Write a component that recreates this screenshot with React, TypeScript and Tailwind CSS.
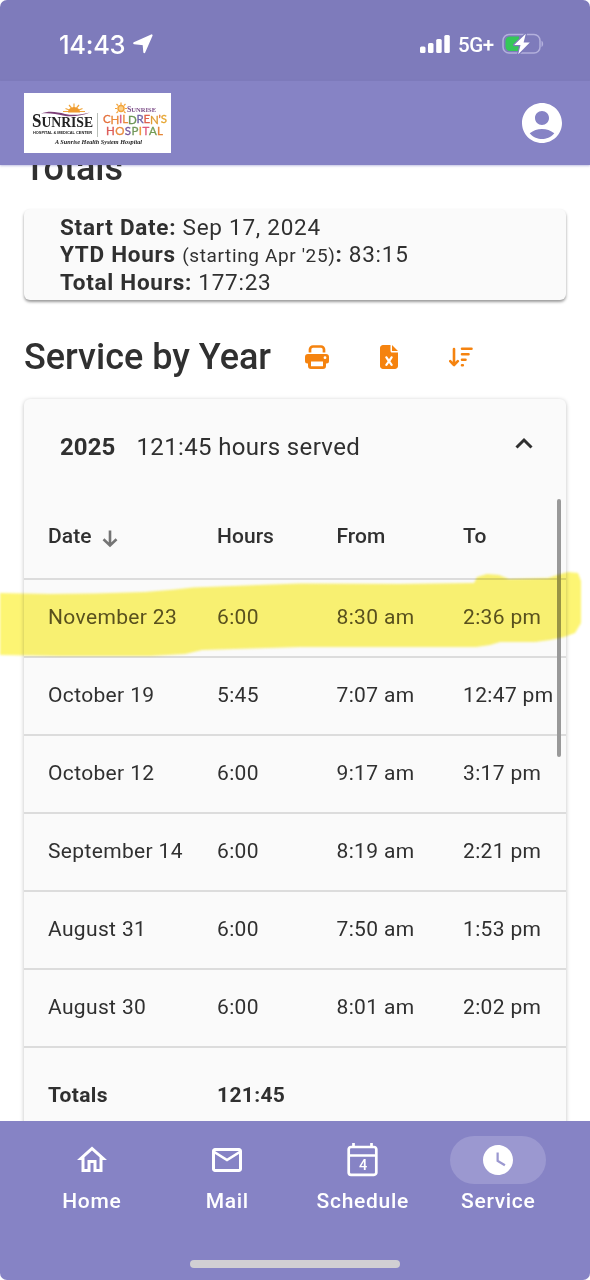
import { clsx } from 'clsx'
import type { ReactNode } from 'react'
import { FaFileExcel } from 'react-icons/fa6'
import {
  MdAccountCircle,
  MdMailOutline,
  MdOutlineHome,
  MdWatchLater,
} from 'react-icons/md'

const shifts = [
  {
    date: 'November 23',
    hours: '6:00',
    from: '8:30 am',
    to: '2:36 pm',
    marked: true,
  },
  { date: 'October 19', hours: '5:45', from: '7:07 am', to: '12:47 pm' },
  { date: 'October 12', hours: '6:00', from: '9:17 am', to: '3:17 pm' },
  { date: 'September 14', hours: '6:00', from: '8:19 am', to: '2:21 pm' },
  { date: 'August 31', hours: '6:00', from: '7:50 am', to: '1:53 pm' },
  { date: 'August 30', hours: '6:00', from: '8:01 am', to: '2:02 pm' },
]

const columns = 'grid grid-cols-[169px_119.5px_126.5px_1fr] items-center pl-6'

function StatusBar() {
  return (
    <div className="flex h-[81px] shrink-0 items-center bg-[#7e7bbb] pt-[7px] pl-[59px] text-white">
      <span className="w-[74px] pt-px font-['Inter'] text-[25.5px] leading-none font-medium tracking-[-0.3px]">
        14:43
      </span>
      <svg
        className="h-5 w-5"
        viewBox="0 0 20 20"
        fill="currentColor"
        stroke="currentColor"
        strokeWidth="2"
        strokeLinejoin="round"
      >
        <path d="M18.600 1.300 11.300 18.200 10.600 10.200 1.200 9.200z" />
      </svg>
      <svg
        className="ml-[267px] h-5 w-[30px]"
        viewBox="0 0 30 20"
        fill="currentColor"
      >
        <rect x="0" y="12.500" width="5.500" height="6.500" rx="1.500" />
        <rect x="8" y="9" width="5.500" height="10" rx="1.500" />
        <rect x="16.200" y="5" width="5.500" height="14" rx="1.500" />
        <rect x="24.300" y="1" width="5.500" height="18" rx="1.500" />
      </svg>
      <span className="ml-2 w-11 pt-0.5 font-['Roboto'] text-[20.5px] leading-none font-medium tracking-[-0.4px]">
        5G+
      </span>
      <svg className="h-6 w-[42px]" viewBox="0 0 42 24">
        <rect
          x="1"
          y="2.500"
          width="37"
          height="18.500"
          rx="6"
          fill="none"
          stroke="#b3b0dc"
          strokeWidth="1.500"
        />
        <path
          d="M8 4.500h9v14.500H8a4.500 4.500 0 0 1-4.500-4.500V9A4.500 4.500 0 0 1 8 4.500z"
          fill="#34c759"
        />
        <path d="M39.500 8.800c2.200 1 2.200 5.200 0 6.200z" fill="#b3b0dc" />
        <path
          d="M23.800 1.800 12.200 13h6.300l-2.300 9.200L27.800 10.500h-6.200z"
          fill="#fff"
          stroke="#7e7bbb"
          strokeWidth="2.500"
          paintOrder="stroke"
          strokeLinejoin="round"
        />
      </svg>
    </div>
  )
}

function HospitalLogo() {
  return (
    <svg className="h-[60px] w-[147px] bg-white" viewBox="0 0 147 60">
      <path
        d="M50 10.500v5M45 12l2.500 3M55 12l-2.500 3M41.500 15.500l5 2M58.500 15.500l-5 2M39 18.500h22"
        stroke="#f0a63c"
        strokeWidth="1.200"
      />
      <path d="M44 19.500a6 5.500 0 0 1 12 0z" fill="#ef9a2e" />
      <path
        d="M17 20.500c8-3 16-1.500 24 .5 8 1.500 15 1 25-1.500-9 3.500-18 4.500-26 3.200-8-1.700-15-3.200-23-2.200z"
        fill="#7d3f78"
      />
      <g fontFamily="Liberation Serif, serif" fontWeight="700" fill="#222">
        <text x="8" y="34" fontSize="18" textLength="61" lengthAdjust="spacingAndGlyphs">
          S<tspan fontSize="14.500">UNRISE</tspan>
        </text>
        <text
          x="31"
          y="51"
          fontSize="6.500"
          fontStyle="italic"
          textLength="87"
          lengthAdjust="spacingAndGlyphs"
        >
          A Sunrise Health System Hospital
        </text>
      </g>
      <text
        x="9"
        y="40.500"
        fontSize="3.900"
        fontFamily="Liberation Sans, sans-serif"
        fontWeight="700"
        fill="#222"
        textLength="59"
        lengthAdjust="spacingAndGlyphs"
      >
        HOSPITAL &amp; MEDICAL CENTER
      </text>
      <path d="M73.500 20v24" stroke="#9ba39b" strokeWidth=".7" />
      <circle cx="97" cy="15.500" r="3" fill="#fbd08a" stroke="#f3a43c" strokeWidth="1.500" />
      <path
        d="M97 9.500v2.500M92.500 11l1.500 1.500M101.500 11 100 12.500M91 15.500h2M101 15.500h2M92.500 20l1.500-1.500M101.500 20l-1.500-1.500"
        stroke="#f3a43c"
        strokeWidth="1.200"
      />
      <text
        x="103"
        y="19"
        fontSize="7.800"
        fontFamily="Liberation Serif, serif"
        fontWeight="700"
        fill="#7b4b86"
        textLength="29"
        lengthAdjust="spacingAndGlyphs"
      >
        S<tspan fontSize="6.500">UNRISE</tspan>
      </text>
      <g fontFamily="Lato, sans-serif" fontSize="11.500" fontWeight="400" strokeWidth=".3">
        <text x="79" y="30" textLength="64">
          <tspan fill="#e4703c" stroke="#e4703c">C</tspan>
          <tspan fill="#e98a3d" stroke="#e98a3d" dy="1">H</tspan>
          <tspan fill="#d45d91" stroke="#d45d91" dy="-1">I</tspan>
          <tspan fill="#e98a3d" stroke="#e98a3d">L</tspan>
          <tspan fill="#6d9557" stroke="#6d9557" dy=".5">D</tspan>
          <tspan fill="#7164a8" stroke="#7164a8" dy="-.5">R</tspan>
          <tspan fill="#df604c" stroke="#df604c">E</tspan>
          <tspan fill="#df9b32" stroke="#df9b32" dy=".5">N</tspan>
          <tspan fill="#e47536" stroke="#e47536" dy="-.5">'</tspan>
          <tspan fill="#e6a52f" stroke="#e6a52f">S</tspan>
        </text>
        <text x="82" y="41.500" textLength="57">
          <tspan fill="#dc5b58" stroke="#dc5b58">H</tspan>
          <tspan fill="#e98a3d" stroke="#e98a3d">O</tspan>
          <tspan fill="#75569c" stroke="#75569c">S</tspan>
          <tspan fill="#73995c" stroke="#73995c">P</tspan>
          <tspan fill="#ee9638" stroke="#ee9638">I</tspan>
          <tspan fill="#df5c7d" stroke="#df5c7d">T</tspan>
          <tspan fill="#739c55" stroke="#739c55">A</tspan>
          <tspan fill="#e48537" stroke="#e48537">L</tspan>
        </text>
      </g>
    </svg>
  )
}

function Summary() {
  return (
    <section className="h-[91px] rounded-md bg-[#fafafa] px-9 pt-[5px] text-[22.500px] leading-[27px] tracking-[0.73px] shadow-[0_2px_3px_rgba(0,0,0,0.4)]">
      <p>
        <b>Start Date:</b> Sep 17, 2024
      </p>
      <p>
        <b>YTD Hours</b>{' '}
        <span className="text-[19px] tracking-[0.63px]">(starting Apr '25)</span>
        <b>:</b> 83:15
      </p>
      <p>
        <b>Total Hours:</b> 177:23
      </p>
    </section>
  )
}

function PrintIcon() {
  return (
    <svg className="h-6 w-6" viewBox="0 0 24 24" fill="none">
      <path
        d="M5 7.500V4.500A3 3 0 0 1 8 1.500h8a3 3 0 0 1 3 3v3"
        stroke="currentColor"
        strokeWidth="2.700"
      />
      <path
        fill="currentColor"
        fillRule="evenodd"
        d="M3 9h18a3 3 0 0 1 3 3v4a2.500 2.500 0 0 1-2.500 2.500H21v2.500a3 3 0 0 1-3 3H6a3 3 0 0 1-3-3v-2.500h-.5A2.500 2.500 0 0 1 0 16v-4a3 3 0 0 1 3-3zm3 7.500v4.800h12v-4.800zM20 11.300a1.400 1.400 0 1 0 0 2.800 1.400 1.400 0 0 0 0-2.800z"
      />
    </svg>
  )
}

function SortIcon() {
  return (
    <svg
      className="h-6 w-6"
      viewBox="0 0 24 24"
      fill="none"
      stroke="currentColor"
      strokeWidth="2.600"
      strokeLinecap="round"
      strokeLinejoin="round"
    >
      <path d="M5 4v16M1.200 16.200 5 20.200l3.800-4M13 3.800H22.500M13 9.300h6.500M13 14.800h3.500M13 20.300h.8" />
    </svg>
  )
}

function ShiftTable() {
  return (
    <div className="text-[21px] tracking-[0.35px]">
      <div
        className={clsx(
          columns,
          'h-[86px] border-b-2 border-[#dcdcdc] pt-0.5 font-medium tracking-[0.05px]',
        )}
      >
        <span className="flex items-center gap-[11px]">
          Date
          <svg
            className="mt-[3px] h-[18px] w-4"
            viewBox="0 0 16 18"
            fill="none"
            stroke="#747474"
            strokeWidth="2.600"
          >
            <path d="M8 .5v15M1.500 9.200 8 15.500l6.500-6.300" />
          </svg>
        </span>
        <span>Hours</span>
        <span>From</span>
        <span>To</span>
      </div>
      {shifts.map((shift) => (
        <div
          key={shift.date}
          className={clsx(
            columns,
            'h-[78px] border-b-2 border-[#dcdcdc] whitespace-nowrap',
            shift.marked && 'text-[#5a5440]',
          )}
        >
          <span>{shift.date}</span>
          <span>{shift.hours}</span>
          <span>{shift.from}</span>
          <span>{shift.to}</span>
        </div>
      ))}
      <div className={clsx(columns, 'h-24 font-bold')}>
        <span>Totals</span>
        <span>121:45</span>
      </div>
    </div>
  )
}

function Highlight() {
  return (
    <svg
      className="pointer-events-none absolute top-[565px] left-0 h-24 w-[590px] mix-blend-multiply blur-[1px]"
      viewBox="0 0 590 96"
    >
      <path
        fill="#fdf573"
        d="M-4 28 50 29 95 28.500 145 27 175 24.500 193 22.500 300 18.500 400 19 474 18 477 12 487 9 499 10 509 14 548 13 557 10 568 7 578 8 581 16 581 58 575 68 564 72 550 75 535 77 500 77 490 80 476 82 400 82 300 82 202 85 185 89 150 91 60 91 -4 90z"
      />
    </svg>
  )
}

function CalendarIcon() {
  return (
    <svg className="h-[34px] w-[31px]" viewBox="0 0 31 34" fill="none">
      <path
        d="M6.500 0v4M24.500 0v4M2 12.500h27M4 4h23a2.300 2.300 0 0 1 2.300 2.300v23.200a2.300 2.300 0 0 1-2.300 2.300H4a2.300 2.300 0 0 1-2.300-2.300V6.300A2.300 2.300 0 0 1 4 4z"
        stroke="currentColor"
        strokeWidth="2.700"
      />
      <text
        x="16"
        y="27"
        textAnchor="middle"
        fontSize="14.500"
        fontWeight="500"
        fill="currentColor"
        fontFamily="Roboto, sans-serif"
      >
        4
      </text>
    </svg>
  )
}

function NavItem({
  label,
  active = false,
  children,
}: {
  label: string
  active?: boolean
  children: ReactNode
}) {
  return (
    <button className="flex w-[135.500px] flex-col items-center">
      <span
        className={clsx(
          'flex h-12 w-24 items-center justify-center rounded-full',
          active && 'bg-[#9b98d0]',
        )}
      >
        {children}
      </span>
      <span className="mt-[3px] text-[21px] leading-7 font-medium tracking-[0.7px]">
        {label}
      </span>
    </button>
  )
}

export default function App() {
  return (
    <div className="relative flex h-[1280px] w-[590px] flex-col overflow-hidden rounded-[7px] bg-white font-['Roboto',sans-serif] text-[#303030]">
      <StatusBar />
      <header className="flex h-[84px] shrink-0 items-center justify-between bg-[#8683c5] px-6 text-white shadow-[0_1px_2px_rgba(134,131,197,0.5)]">
        <HospitalLogo />
        <MdAccountCircle className="size-[48px]" />
      </header>

      <main className="h-[956px] shrink-0 overflow-hidden px-6">
        <h2 className="-mt-[19px] h-[63px] text-[36px] leading-[44px] font-medium">
          Totals
        </h2>
        <Summary />
        <div className="flex h-[99px] items-center pt-[15px]">
          <h2 className="w-[281px] text-[36px] font-medium">Service by Year</h2>
          <div className="flex items-center gap-12 text-[#f5830f]">
            <PrintIcon />
            <FaFileExcel className="size-6" />
            <SortIcon />
          </div>
        </div>
        <section className="relative h-[800px] rounded-t-md bg-[#fafafa] shadow-[0_1px_4px_rgba(0,0,0,0.25)]">
          <div className="flex h-[95px] items-center px-9 text-[24px] tracking-[0.35px]">
            <b className="tracking-[0.1px]">2025</b>
            <span className="ml-[21px]">121:45 hours served</span>
            <svg
              className="-mr-[3px] mb-[7px] ml-auto h-3 w-[18px]"
              viewBox="0 0 18 12"
              fill="none"
              stroke="currentColor"
              strokeWidth="3"
            >
              <path d="M1.500 10.500 9 3l7.500 7.500" />
            </svg>
          </div>
          <ShiftTable />
          <div className="absolute top-[100px] right-[5px] h-[258px] w-[4px] rounded-full bg-[#999]" />
        </section>
      </main>

      <nav className="h-[159px] shrink-0 bg-[#8683c5] text-white">
        <div className="flex h-[139px] justify-center pt-[15px]">
          <NavItem label="Home">
            <MdOutlineHome className="size-9" />
          </NavItem>
          <NavItem label="Mail">
            <MdMailOutline className="size-9" />
          </NavItem>
          <NavItem label="Schedule">
            <CalendarIcon />
          </NavItem>
          <NavItem label="Service" active>
            <MdWatchLater className="size-9" />
          </NavItem>
        </div>
        <div className="mx-auto h-2 w-[210px] rounded-full bg-[#d1cfd3]" />
      </nav>
      <Highlight />
    </div>
  )
}
